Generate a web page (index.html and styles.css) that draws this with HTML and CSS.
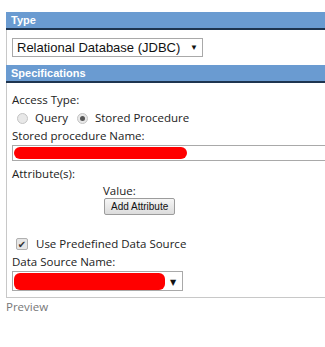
FILE: index.html
```html
<!DOCTYPE html>
<html>
  <head>
    <meta charset="UTF-8">
    <title>Data Source</title>
    <link rel="stylesheet" href="styles.css">
  </head>
  <body>
    <div class="panel">
      <div class="bar">Type</div>
      <div class="section type-section">
        <div class="dropdown type-select">
          <span class="dropdown-text">Relational Database (JDBC)</span>
          <span class="arrow">&#9660;</span>
        </div>
      </div>
      <div class="bar">Specifications</div>
      <div class="section spec-section">
        <div class="line">Access Type:</div>
        <div class="line radios">
          <span class="radio"></span><span class="radio-label">Query</span>
          <span class="radio checked"></span><span class="radio-label">Stored Procedure</span>
        </div>
        <div class="line">Stored procedure Name:</div>
        <div class="textbox"><span class="redact"></span></div>
        <div class="line attr-label">Attribute(s):</div>
        <div class="attr-block">
          <div class="value-label">Value:</div>
          <button class="btn">Add Attribute</button>
        </div>
        <div class="line check-row">
          <span class="checkbox">&#10004;</span><span>Use Predefined Data Source</span>
        </div>
        <div class="line">Data Source Name:</div>
        <div class="dropdown ds-select">
          <span class="redact ds-redact"></span>
          <span class="arrow">&#9660;</span>
        </div>
      </div>
    </div>
    <div class="preview">Preview</div>
  </body>
</html>
```

FILE: styles.css
```css
html,body {
  margin:0;
  padding:0;
  background:#fff;
}
body {
  padding:12px 0 0 6px;
  font-family:'Open Sans', 'DejaVu Sans', sans-serif;
  font-size:11.5px;
  color:#222;
}

.bar {
  height:16px;
  line-height:16px;
  background:#6a9bd1;
  border-bottom:2px solid #1e344f;
  color:#fff;
  font-family:'Liberation Sans', sans-serif;
  font-weight:bold;
  font-size:11px;
  padding-left:5px;
}

.section {
  border-left:1px solid #c8c8c8;
  padding-left:5px;
}
.type-section { padding-top:8px; padding-bottom:8px; }
.spec-section {
  padding-top:8px;
  padding-bottom:6px;
  border-bottom:1px solid #c8c8c8;
}

.line { height:18px; line-height:18px; white-space:nowrap; }

.dropdown {
  display:flex;
  align-items:center;
  box-sizing:border-box;
  border:1px solid #a9a9a9;
  background:#fff;
}
.type-select {
  width:191px;
  height:19px;
  padding-left:4px;
  font-family:'Liberation Sans', sans-serif;
  font-size:13px;
  color:#111;
  white-space:nowrap;
}
.dropdown-text { flex:1; }
.arrow {
  font-size:8px;
  color:#111;
  width:16px;
  text-align:center;
}

.radios { display:flex; align-items:center; }
.radio {
  width:9px;
  height:9px;
  border:1px solid #c4c4c4;
  border-radius:50%;
  background:#e8e8e8;
  margin:0 7px 0 5px;
  position:relative;
}
.radio.checked::after {
  content:"";
  position:absolute;
  left:2px;
  top:2px;
  width:5px;
  height:5px;
  border-radius:50%;
  background:#555;
}
.radio-label { margin-right:4px; }

.textbox {
  box-sizing:border-box;
  height:16px;
  border:1px solid #a9a9a9;
  border-right:none;
  padding:1px 1px;
}
.redact {
  display:block;
  background:#f00;
  border-radius:6px;
}
.textbox .redact { width:173px; height:12px; }

.attr-label { margin-top:4px; }
.attr-block { padding-left:91px; }
.value-label { height:16px; line-height:16px; }
.btn {
  display:block;
  margin:-1px 0 0 1px;
  height:17px;
  padding:0 6px;
  font-family:'Liberation Sans', sans-serif;
  font-size:10px;
  color:#111;
  background:linear-gradient(#f6f6f6, #dcdcdc);
  border:1px solid #9c9c9c;
  border-radius:2px;
}

.check-row {
  display:flex;
  align-items:center;
  margin-top:20px;
}
.checkbox {
  box-sizing:border-box;
  width:12px;
  height:12px;
  border:1px solid #b0b0b0;
  border-radius:2px;
  background:#e6e6e6;
  font-size:10px;
  line-height:10px;
  text-align:center;
  color:#333;
  margin:0 8px 0 4px;
}

.ds-select {
  width:171px;
  height:20px;
  padding:1px;
}
.ds-redact { width:151px; height:17px; border-radius:6px; }
.ds-select .arrow { margin-left:auto; width:16px; }

.preview {
  height:16px;
  line-height:16px;
  margin-top:1px;
  color:#777;
}
```
